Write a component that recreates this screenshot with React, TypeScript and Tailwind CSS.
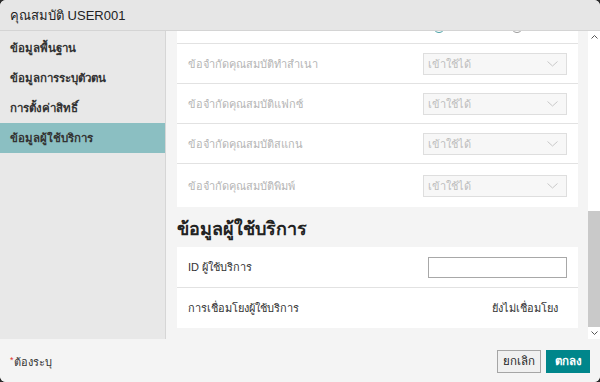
import React from "react";

const font = { fontFamily: '"Liberation Sans", "Noto Sans", Tahoma, sans-serif' };

function Chevron({ className = "" }: { className?: string }) {
  return (
    <svg width="11" height="6" viewBox="0 0 11 6" className={className}>
      <polyline points="0.5,0.5 5.5,5 10.5,0.5" fill="none" stroke="#c8c8c8" strokeWidth="1" />
    </svg>
  );
}

function SelectRow({ label, last }: { label: string; last?: boolean }) {
  return (
    <div
      className={`flex items-center justify-between pl-[11px] pr-[11px] ${
        last ? "h-[43px]" : "h-[40px] border-b border-[#e2e2e2]"
      }`}
    >
      <span className="text-[11px] text-[#b5b5b5] pt-[1px]">{label}</span>
      <div className="w-[144px] h-[22px] bg-[#f7f7f7] border border-[#dedede] flex items-center justify-between pl-[4px] pr-[8px]">
        <span className="text-[11px] text-[#bdbdbd] pt-[1px]">เข้าใช้ได้</span>
        <Chevron />
      </div>
    </div>
  );
}

export default function App() {
  const nav = ["ข้อมูลพื้นฐาน", "ข้อมูลการระบุตัวตน", "การตั้งค่าสิทธิ์", "ข้อมูลผู้ใช้บริการ"];
  return (
    <div className="w-[600px] h-[382px] bg-[#2b2b2b]" style={font}>
      <div className="w-full h-full rounded-[6px] overflow-hidden flex flex-col bg-[#f4f4f4]">
        {/* header */}
        <div className="h-[31px] shrink-0 bg-[#e6e6e6] border-b border-[#d4d4d4] flex items-center px-[10px]">
          <span className="text-[13px] text-[#222] pt-[1px]">คุณสมบัติ USER001</span>
        </div>
        {/* body */}
        <div className="flex h-[308px] shrink-0">
          <div className="w-[166px] shrink-0 bg-[#e8e8e8] border-r border-[#d6d6d6] pt-[2px]">
            {nav.map((n, i) => (
              <div
                key={n}
                className={`h-[30px] flex items-center px-[10px] text-[11.5px] font-bold text-[#333] ${
                  i === 3 ? "bg-[#8bbfc2]" : ""
                }`}
              >
                <span className="pt-[1px]">{n}</span>
              </div>
            ))}
          </div>
          <div className="flex-1 flex min-w-0">
            <div className="flex-1 pl-[11px] pr-[10px] overflow-hidden">
              <div className="bg-white">
                <div className="relative h-[13px] border-b border-[#e2e2e2] overflow-hidden">
                  <div className="absolute top-[-10px] left-[256px] w-[12px] h-[12px] rounded-full border-[1.5px] border-[#4aa0a5]" />
                  <div className="absolute top-[-10px] left-[334px] w-[12px] h-[12px] rounded-full border-[1.5px] border-[#9a9a9a]" />
                </div>
                <SelectRow label="ข้อจำกัดคุณสมบัติทำสำเนา" />
                <SelectRow label="ข้อจำกัดคุณสมบัติแฟกซ์" />
                <SelectRow label="ข้อจำกัดคุณสมบัติสแกน" />
                <SelectRow label="ข้อจำกัดคุณสมบัติพิมพ์" last />
              </div>
              <div className="h-[40px] flex items-center">
                <span className="text-[18px] font-bold text-[#222] mt-[5px]">ข้อมูลผู้ใช้บริการ</span>
              </div>
              <div className="bg-white">
                <div className="h-[41px] border-b border-[#e2e2e2] flex items-center justify-between pl-[11px] pr-[11px]">
                  <span className="text-[11px] text-[#333] pt-[1px]">ID ผู้ใช้บริการ</span>
                  <div className="w-[139px] h-[21px] bg-white border border-[#a8a8a8]" />
                </div>
                <div className="h-[40px] flex items-center justify-between pl-[11px] pr-[20px]">
                  <span className="text-[11px] text-[#333] pt-[1px]">การเชื่อมโยงผู้ใช้บริการ</span>
                  <span className="text-[11px] text-[#333] pt-[1px]">ยังไม่เชื่อมโยง</span>
                </div>
              </div>
            </div>
            {/* scrollbar */}
            <div className="w-[12px] shrink-0 bg-white flex flex-col">
              <div className="h-[12px] flex items-center justify-center">
                <svg width="7" height="4" viewBox="0 0 7 4">
                  <polyline points="0.5,3.5 3.5,0.5 6.5,3.5" fill="none" stroke="#555" strokeWidth="1" />
                </svg>
              </div>
              <div className="flex-1 flex flex-col justify-end">
                <div className="h-[116px] bg-[#c9c9c9]" />
              </div>
              <div className="h-[12px] flex items-center justify-center">
                <svg width="7" height="4" viewBox="0 0 7 4">
                  <polyline points="0.5,0.5 3.5,3.5 6.5,0.5" fill="none" stroke="#555" strokeWidth="1" />
                </svg>
              </div>
            </div>
          </div>
        </div>
        {/* footer */}
        <div className="flex-1 flex items-center justify-between pl-[10px] pr-[10px] bg-[#f4f4f4]">
          <span className="text-[11px] text-[#333] pt-[3px]">
            <span className="text-[#e0302f] text-[9px] align-top">*</span>ต้องระบุ
          </span>
          <div className="flex gap-[5px] pt-[1px]">
            <button className="h-[23px] w-[44px] bg-[#f0f0f0] border border-[#a5a5a5] text-[11.5px] text-[#222] pt-[2px]">
              ยกเลิก
            </button>
            <button className="h-[23px] w-[44px] bg-[#00868b] text-[11.5px] font-bold text-white pt-[2px]">
              ตกลง
            </button>
          </div>
        </div>
      </div>
    </div>
  );
}
